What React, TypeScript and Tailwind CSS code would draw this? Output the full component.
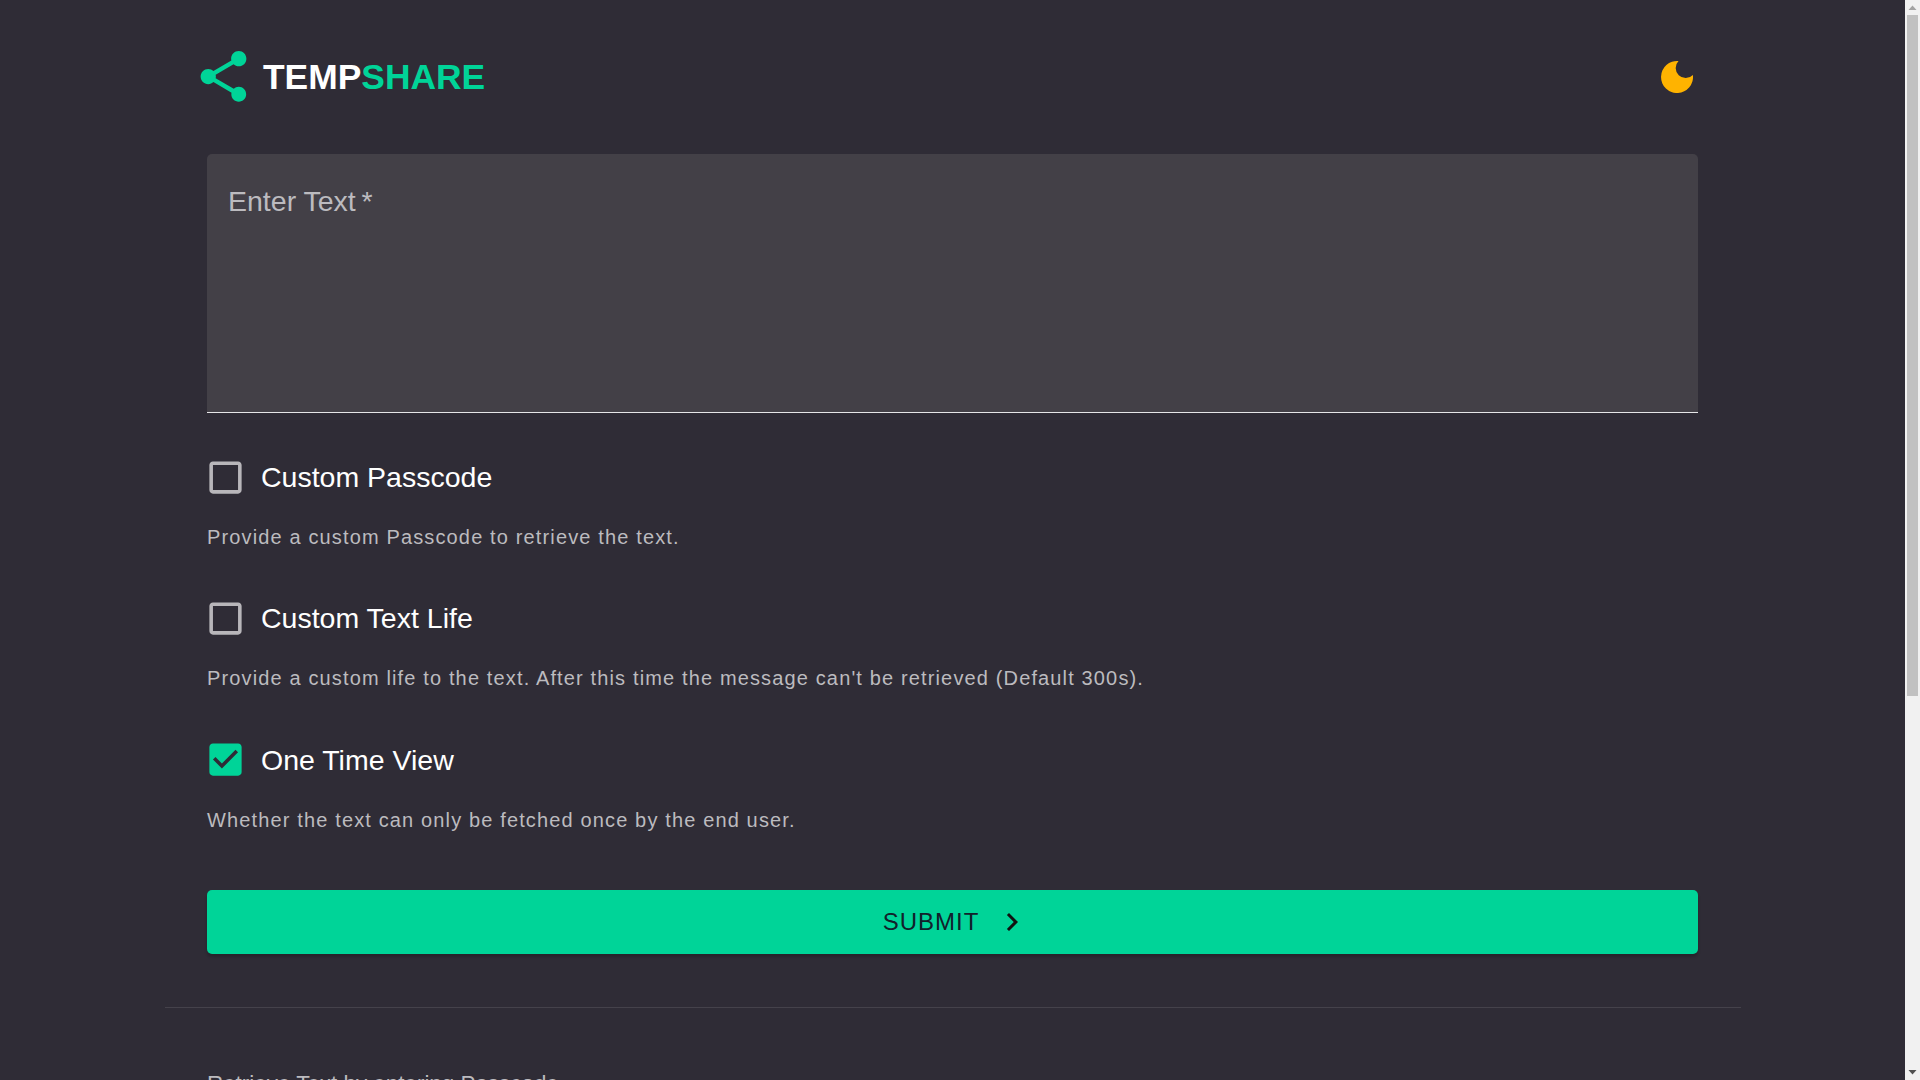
import React, { useState } from "react";

const font = "font-['Liberation_Sans',Arial,sans-serif]";

type OptionProps = {
  label: string;
  hint: string;
  checked: boolean;
  onToggle: () => void;
};

function Option({ label, hint, checked, onToggle }: OptionProps) {
  return (
    <div className="flex flex-col">
      <label className="flex items-center h-[54px] -ml-[3px] cursor-pointer" onClick={onToggle}>
        {checked ? (
          <svg viewBox="0 0 24 24" className="w-[43px] h-[43px]">
            <path
              fill="#00d498"
              d="M19 3H5c-1.11 0-2 .9-2 2v14c0 1.1.89 2 2 2h14c1.11 0 2-.9 2-2V5c0-1.1-.89-2-2-2z"
            />
            <path fill="#2f2c36" d="M10 17l-5-5 1.41-1.41L10 14.17l7.59-7.59L19 8l-9 9z" />
          </svg>
        ) : (
          <svg viewBox="0 0 24 24" className="w-[43px] h-[43px]">
            <path
              fill="#b8b6ba"
              d="M19 5v14H5V5h14m0-2H5c-1.1 0-2 .9-2 2v14c0 1.1.9 2 2 2h14c1.1 0 2-.9 2-2V5c0-1.1-.9-2-2-2z"
            />
          </svg>
        )}
        <span className="ml-[14px] text-[28.5px] leading-[36px] text-white">{label}</span>
      </label>
      <p className="mt-[18px] text-[20px] leading-[30px] tracking-[1.14px] text-[#bcbbbf]">{hint}</p>
    </div>
  );
}

// the browser's scrollbar, which the headless window doesn't paint
function Scrollbar() {
  return (
    <div className="fixed top-0 right-0 flex flex-col items-center w-[15px] h-screen bg-[#f1f1f1]">
      <svg viewBox="0 0 15 15" className="w-[15px] h-[15px] shrink-0">
        <path fill="#a3a3a3" d="M7.5 5.5 11.5 10h-8z" />
      </svg>
      <div className="w-[11px] h-[681px] bg-[#c1c1c1]" />
      <div className="flex-1" />
      <svg viewBox="0 0 15 15" className="w-[15px] h-[15px] shrink-0">
        <path fill="#505050" d="M3.5 5h8l-4 4.5z" />
      </svg>
    </div>
  );
}

export default function App() {
  const [passcode, setPasscode] = useState(false);
  const [life, setLife] = useState(false);
  const [oneTime, setOneTime] = useState(true);

  return (
    <div className={`${font} min-h-[1664px] bg-[#2f2c36]`}>
      <Scrollbar />
      <div className="flex flex-col w-[1576px] ml-[165px]">
        <div className="pl-[42px] pr-[43px]">
          <header className="flex items-center justify-between h-[154px] pb-[1px]">
            <div className="flex items-center -ml-[14px]">
              <svg viewBox="0 0 24 24" className="w-[61px] h-[61px]">
                <path
                  fill="#00d498"
                  d="M18 16.08c-.76 0-1.44.3-1.96.77L8.91 12.7c.05-.23.09-.46.09-.7s-.04-.47-.09-.7l7.05-4.11c.54.5 1.25.81 2.04.81 1.66 0 3-1.34 3-3s-1.34-3-3-3-3 1.34-3 3c0 .24.04.47.09.7L8.04 9.81C7.5 9.31 6.79 9 6 9c-1.66 0-3 1.34-3 3s1.34 3 3 3c.79 0 1.5-.31 2.04-.81l7.12 4.16c-.05.21-.08.43-.08.65 0 1.61 1.31 2.92 2.92 2.92 1.61 0 2.92-1.31 2.92-2.92s-1.31-2.92-2.92-2.92z"
                />
              </svg>
              <h1 className="ml-[9px] text-[35.4px] leading-[40px] font-bold text-white">
                TEMP<span className="text-[#00d498]">SHARE</span>
              </h1>
            </div>
            <svg viewBox="0 0 32 32" className="w-[32px] h-[32px] mr-[5px]">
              <path fill="#ffb300" d="M17.5 .1A16 16 0 1 0 31.9 14A10 10 0 1 1 17.5 .1z" />
            </svg>
          </header>

          <div className="flex flex-col h-[259px] rounded-t-[5px] bg-[#434047] border-b border-[#e6e6e8] px-[21px] pt-[29px]">
            <span className="text-[28.5px] leading-[36px] text-[#bcbbbf]">Enter Text{"\u2009"}*</span>
          </div>

          <div className="flex flex-col gap-[39.4px] mt-[37px]">
            <Option
              label="Custom Passcode"
              hint="Provide a custom Passcode to retrieve the text."
              checked={passcode}
              onToggle={() => setPasscode(!passcode)}
            />
            <Option
              label="Custom Text Life"
              hint="Provide a custom life to the text. After this time the message can't be retrieved (Default 300s)."
              checked={life}
              onToggle={() => setLife(!life)}
            />
            <Option
              label="One Time View"
              hint="Whether the text can only be fetched once by the end user."
              checked={oneTime}
              onToggle={() => setOneTime(!oneTime)}
            />
          </div>

          <button className="flex items-center justify-center w-full h-[64px] mt-[55.2px] rounded-[5px] bg-[#00d498] text-[24px] tracking-[1px] text-[#12212b] shadow-[0_3px_3px_rgba(0,0,0,0.2)]">
            SUBMIT
            <svg viewBox="0 0 24 24" className="w-[36px] h-[36px] ml-[15px] -mr-[8px]">
              <path fill="#111" d="M10 6 8.59 7.41 13.17 12l-4.58 4.59L10 18l6-6z" />
            </svg>
          </button>
        </div>

        <hr className="mt-[53px] border-t border-[#45424b]" />

        <div className="pl-[42px] pr-[43px] pt-[61px]">
          <p className="text-[22.4px] leading-[30px] text-[#bcbbbf]">Retrieve Text by entering Passcode</p>
          <div className="flex items-center h-[80px] mt-[24px] rounded-t-[5px] bg-[#434047] border-b border-[#e6e6e8] px-[21px]">
            <span className="text-[28.5px] text-[#bcbbbf]">Passcode{"\u2009"}*</span>
          </div>
          <button className="w-full h-[64px] mt-[41px] rounded-[5px] bg-[#00d498] text-[24px] tracking-[1px] text-[#12212b]">
            RETRIEVE
          </button>
        </div>
      </div>
    </div>
  );
}
